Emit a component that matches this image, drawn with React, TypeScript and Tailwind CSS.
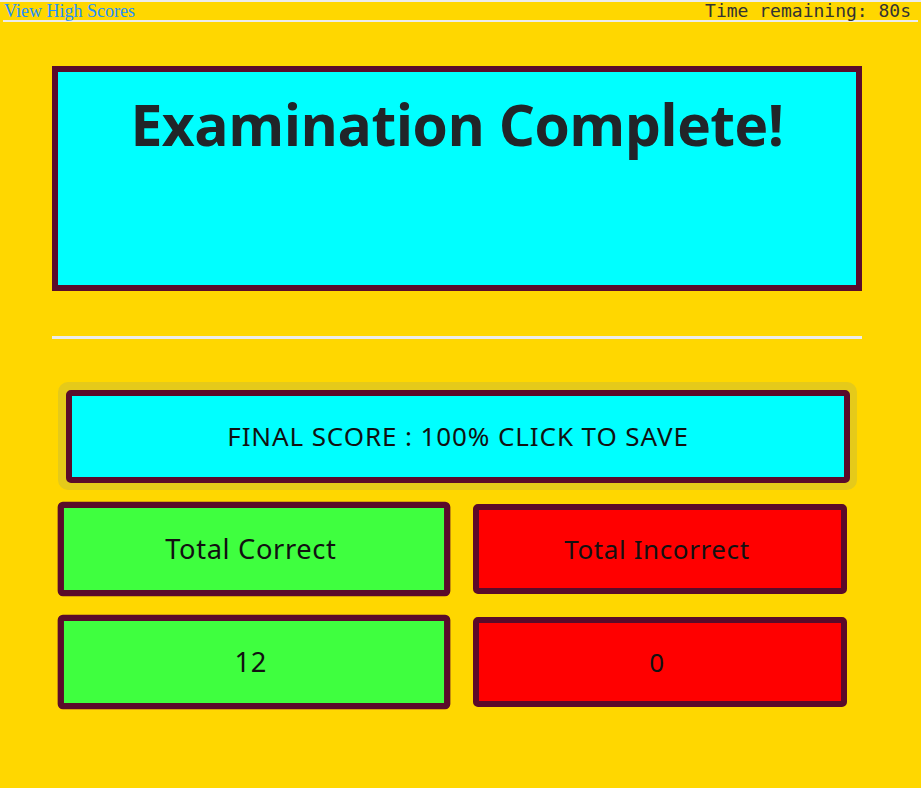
import React from "react";

export default function App() {
  const box =
    "h-[90px] flex items-center justify-center rounded-[5px] border-[6px] border-[#5a0b2a] text-[26px] tracking-[0.6px] text-[#111] pr-[6px]";
  return (
    <div className="min-h-screen bg-[#ffd700] border-t-2 border-[#ececec]" style={{ fontFamily: '"Noto Sans", "Open Sans", sans-serif' }}>
      <div className="mx-[3px] h-[20px] flex justify-between items-start border-b-2 border-[#ececec]">
        <a className="text-[18px] leading-[18px] text-[#1e90ff] pl-[1px]" style={{ fontFamily: '"Liberation Serif", serif' }}>
          View High Scores
        </a>
        <span className="text-[18px] leading-[18px] text-[#333] font-light mr-[7px]" style={{ fontFamily: '"DejaVu Sans Mono", "Liberation Mono", monospace' }}>
          Time remaining: 80s
        </span>
      </div>

      <div className="ml-[52px] w-[810px] mt-[44px] h-[225px] bg-[#00ffff] border-[6px] border-[#5a0b2a] flex justify-center">
        <h1 className="mt-[12px] text-[57px] font-bold text-[#212529] leading-[80px] tracking-[-0.5px]" style={{ fontFamily: '"Open Sans", sans-serif' }}>
          Examination Complete!
        </h1>
      </div>

      <div className="ml-[52px] w-[810px] mt-[45px] h-[3px] bg-[#ececec]" />

      <div className="ml-[58px] w-[799px] mt-[43px] h-[108px] rounded-[10px] bg-[#e5ca1a] pt-[8px] pl-[8px] pr-[7px]">
        <div className="h-[93px] flex items-center justify-center rounded-[5px] border-[6px] border-[#5a0b2a] bg-[#00ffff] text-[26px] tracking-[0.9px] text-[#111]">
          FINAL SCORE : 100% CLICK TO SAVE
        </div>
      </div>

      <div className="ml-[67px] w-[780px] mt-[14px] grid grid-cols-2 gap-x-[32px] gap-y-[23px]">
        <div className={box + " bg-[#3fff3f] scale-105"}>Total Correct</div>
        <div className={box + " bg-[#ff0000]"}>Total Incorrect</div>
        <div className={box + " bg-[#3fff3f] scale-105"}>12</div>
        <div className={box + " bg-[#ff0000]"}>0</div>
      </div>
    </div>
  );
}
